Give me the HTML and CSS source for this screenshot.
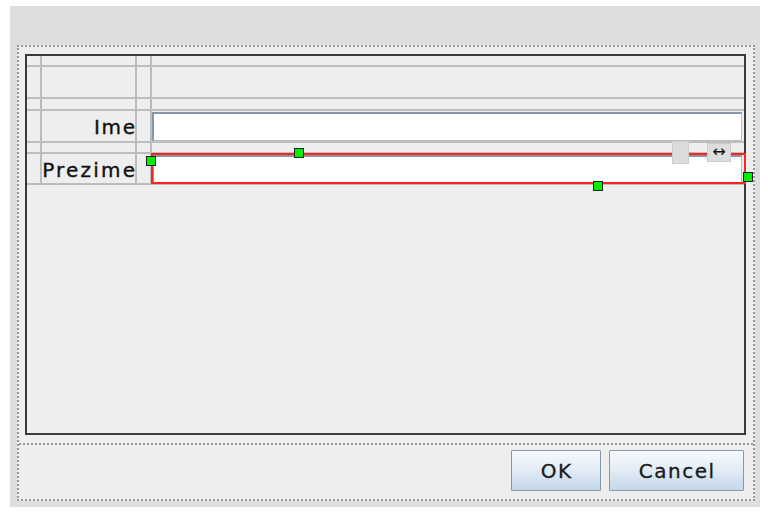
FILE: index.html
```html
<!DOCTYPE html>
<html>
<head>
<meta charset="utf-8">
<link rel="stylesheet" href="styles.css">
</head>
<body>
<div class="frame">
  <div class="dialog">
    <div class="designer">
      <div class="grid">
        <div class="cell"></div><div class="cell"></div><div class="cell"></div><div class="cell"></div>
        <div class="cell"></div><div class="cell"></div><div class="cell"></div><div class="cell"></div>
        <div class="cell"></div><div class="cell"></div><div class="cell"></div><div class="cell"></div>
        <div class="cell"></div><div class="cell label label-ime"><span class="label-text">Ime</span></div><div class="cell"></div><div class="cell"><div class="field field-ime"></div></div>
        <div class="cell"></div><div class="cell"></div><div class="cell"></div><div class="cell"></div>
        <div class="cell"></div><div class="cell label label-prezime"><span class="label-text">Prezime</span></div><div class="cell"></div>
        <div class="cell sel-cell">
          <div class="field field-prezime"></div>
          <div class="selection"></div>
          <div class="spacer-block"></div>
          <div class="resize-btn">↔</div>
          <div class="handle h-left"></div>
          <div class="handle h-top"></div>
          <div class="handle h-right"></div>
          <div class="handle h-bottom"></div>
        </div>
      </div>
    </div>
    <div class="buttons">
      <button class="btn btn-ok">OK</button>
      <button class="btn btn-cancel">Cancel</button>
    </div>
  </div>
</div>
</body>
</html>
```

FILE: styles.css
```css
html, body {
  margin: 0;
  padding: 0;
  background: #ffffff;
}

body {
  font-family: "DejaVu Sans", "Liberation Sans", sans-serif;
}

.frame {
  margin: 6px 0 0 10px;
  width: 750px;
  height: 501px;
  box-sizing: border-box;
  padding: 39px 5px 6px 7px;
  background: #dedede;
}

.dialog {
  width: 738px;
  height: 456px;
  box-sizing: border-box;
  border: 2px dotted #9a9a9a;
  background: #eeeeee;
  display: flex;
  flex-direction: column;
}

.designer {
  margin: 7px 7px 8px 6px;
  height: 381px;
  box-sizing: border-box;
  border: 2px solid #3a3a3a;
  background: #eeeeee;
}

.grid {
  display: grid;
  grid-template-columns: 13px 93px 13px 1fr;
  grid-template-rows: 9px 30px 10px 30px 9px 29px;
  gap: 2px;
  padding-bottom: 2px;
  background: #bdbdbd;
}

.cell {
  background: #eeeeee;
  min-width: 0;
}

.label {
  display: flex;
  align-items: center;
  justify-content: flex-end;
  font-size: 20px;
  line-height: 22px;
  color: #111111;
  -webkit-text-stroke: 0.35px #111111;
}

.label-text {
  letter-spacing: 1.6px;
  margin-right: -1.6px;
  white-space: nowrap;
}

.label-ime {
  padding-top: 2px;
}

.label-prezime {
  padding-top: 3px;
}

.label-prezime .label-text {
  letter-spacing: 2.2px;
  margin-right: -2.2px;
}

.field {
  background: #ffffff;
  box-sizing: border-box;
  border-style: solid;
  border-width: 2px 1px 1px 2px;
  border-color: #8797aa #b3becb #b3becb #8797aa;
}

.field-ime {
  margin: 1px 2px 0 0;
  height: 29px;
}

.sel-cell {
  position: relative;
}

.field-prezime {
  margin: 1px 2px 0 0;
  height: 29px;
}

.selection {
  position: absolute;
  left: -1px;
  top: -1px;
  right: -2px;
  bottom: -1px;
  border: 2px solid #ff2222;
  box-sizing: border-box;
}

.spacer-block {
  position: absolute;
  left: 520px;
  top: -13px;
  width: 17px;
  height: 23px;
  box-sizing: border-box;
  background: #dcdcdc;
  border: 1px solid #cfcfcf;
}

.resize-btn {
  position: absolute;
  left: 555px;
  top: -11px;
  width: 24px;
  height: 19px;
  box-sizing: border-box;
  background: #dddddd;
  border: 1px solid #cccccc;
  font-size: 16px;
  line-height: 16px;
  text-align: center;
  color: #111111;
}

.handle {
  position: absolute;
  width: 10px;
  height: 10px;
  box-sizing: border-box;
  background: #00ee00;
  border: 1px solid #222222;
}

.h-left {
  left: -6px;
  top: 2px;
}

.h-top {
  left: 142px;
  top: -6px;
}

.h-right {
  left: 591px;
  top: 18px;
}

.h-bottom {
  left: 441px;
  top: 27px;
}

.buttons {
  flex: 1;
  border-top: 2px dotted #9a9a9a;
  display: flex;
  justify-content: flex-end;
  align-items: flex-start;
  gap: 8px;
  padding: 5px 9px 0 0;
}

.btn {
  height: 41px;
  box-sizing: border-box;
  border: 1px solid #8598ae;
  border-radius: 1px;
  background: linear-gradient(#f7fafd, #e4edf6 45%, #c5d8ea);
  font-family: "DejaVu Sans", "Liberation Sans", sans-serif;
  font-size: 20px;
  letter-spacing: 1.5px;
  padding: 0 0 0 1.5px;
  color: #1a1a1a;
  -webkit-text-stroke: 0.3px #1a1a1a;
  line-height: 22px;
}

.btn-ok {
  width: 90px;
}

.btn-cancel {
  width: 135px;
}
```
